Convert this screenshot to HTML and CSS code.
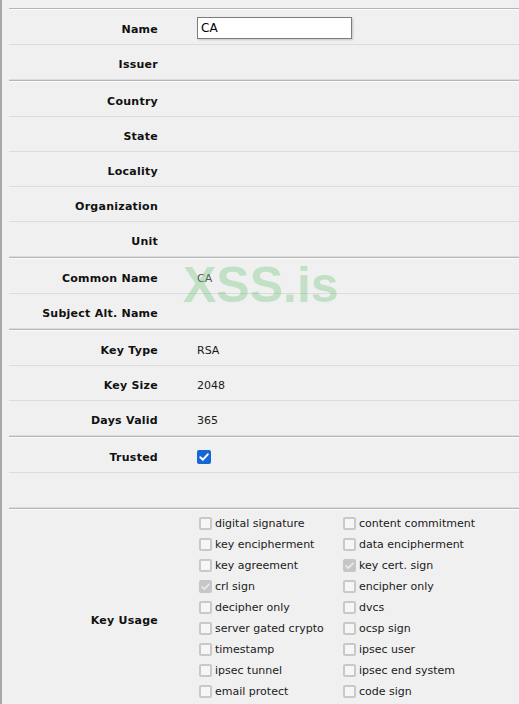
FILE: index.html
```html
<!DOCTYPE html>
<html>
<head>
<meta charset="utf-8">
<link rel="stylesheet" href="styles.css">
</head>
<body>
<div class="page">
  <div class="group">
    <div class="row"><div class="label">Name</div><div class="value"><div class="textbox">CA</div></div></div>
    <div class="row"><div class="label">Issuer</div><div class="value"></div></div>
  </div>
  <div class="group">
    <div class="row"><div class="label">Country</div><div class="value"></div></div>
    <div class="row"><div class="label">State</div><div class="value"></div></div>
    <div class="row"><div class="label">Locality</div><div class="value"></div></div>
    <div class="row"><div class="label">Organization</div><div class="value"></div></div>
    <div class="row"><div class="label">Unit</div><div class="value"></div></div>
  </div>
  <div class="group">
    <div class="row"><div class="label">Common Name</div><div class="value muted">CA</div></div>
    <div class="row"><div class="label">Subject Alt. Name</div><div class="value"></div></div>
  </div>
  <div class="group">
    <div class="row"><div class="label">Key Type</div><div class="value">RSA</div></div>
    <div class="row"><div class="label">Key Size</div><div class="value">2048</div></div>
    <div class="row"><div class="label">Days Valid</div><div class="value">365</div></div>
  </div>
  <div class="group">
    <div class="row"><div class="label">Trusted</div><div class="value"><span class="cb cb-on"><svg viewBox="0 0 14 14" width="14" height="14"><path d="M3.3 7.2 L5.9 9.7 L10.8 4.3" fill="none" stroke="#fff" stroke-width="2" stroke-linecap="round" stroke-linejoin="round"/></svg></span></div></div>
    <div class="row"><div class="label"></div><div class="value"></div></div>
  </div>
  <div class="group">
    <div class="row usage-row">
      <div class="label">Key Usage</div>
      <div class="value">
        <div class="checks">
          <label class="chk"><span class="cb"></span>digital signature</label>
          <label class="chk"><span class="cb"></span>content commitment</label>
          <label class="chk"><span class="cb"></span>key encipherment</label>
          <label class="chk"><span class="cb"></span>data encipherment</label>
          <label class="chk"><span class="cb"></span>key agreement</label>
          <label class="chk"><span class="cb cb-dis"><svg viewBox="0 0 13 13" width="13" height="13"><path d="M3 6.8 L5.4 9.1 L10 4.2" fill="none" stroke="#ececec" stroke-width="1.6" stroke-linecap="round" stroke-linejoin="round"/></svg></span>key cert. sign</label>
          <label class="chk"><span class="cb cb-dis"><svg viewBox="0 0 13 13" width="13" height="13"><path d="M3 6.8 L5.4 9.1 L10 4.2" fill="none" stroke="#ececec" stroke-width="1.6" stroke-linecap="round" stroke-linejoin="round"/></svg></span>crl sign</label>
          <label class="chk"><span class="cb"></span>encipher only</label>
          <label class="chk"><span class="cb"></span>decipher only</label>
          <label class="chk"><span class="cb"></span>dvcs</label>
          <label class="chk"><span class="cb"></span>server gated crypto</label>
          <label class="chk"><span class="cb"></span>ocsp sign</label>
          <label class="chk"><span class="cb"></span>timestamp</label>
          <label class="chk"><span class="cb"></span>ipsec user</label>
          <label class="chk"><span class="cb"></span>ipsec tunnel</label>
          <label class="chk"><span class="cb"></span>ipsec end system</label>
          <label class="chk"><span class="cb"></span>email protect</label>
          <label class="chk"><span class="cb"></span>code sign</label>
        </div>
      </div>
    </div>
  </div>
  <div class="watermark">XSS.is</div>
</div>
</body>
</html>
```

FILE: styles.css
```css
html, body {
  margin: 0;
  padding: 0;
  background: #f0f0f0;
}
body {
  font-family: "DejaVu Sans", Verdana, sans-serif;
  font-size: 11px;
  color: #1a1a1a;
}
.page {
  position: relative;
  min-height: 100vh;
  border-left: 2px solid #a8a8a8;
  padding-top: 8px;
  padding-left: 7px;
  box-sizing: border-box;
}
.group {
  border-top: 1px solid #b7b7b7;
}
.group > .row:first-child {
  border-top: 1px solid #fafafa;
}
.row {
  display: flex;
  align-items: center;
  height: 34px;
  border-bottom: 1px solid #dcdcdc;
}
.label {
  width: 149px;
  flex: none;
  text-align: right;
  font-weight: bold;
  letter-spacing: 0.25px;
  color: #111;
  padding-top: 4px;
}
.value {
  margin-left: 39px;
  flex: 1;
  padding-top: 4px;
}
.muted {
  color: #555;
}
.textbox {
  width: 150px;
  height: 20px;
  line-height: 20px;
  margin-top: -2px;
  background: #fff;
  border: 1px solid #7d7d7d;
  box-shadow: 1px 1px 2px rgba(0,0,0,0.18);
  padding-left: 3px;
  font-size: 12px;
  color: #000;
}
.cb {
  display: inline-block;
  width: 13px;
  height: 13px;
  box-sizing: border-box;
  border: 2px solid #c9c9c9;
  border-radius: 2px;
  background: #f6f6f6;
  vertical-align: middle;
  flex: none;
}
.cb svg {
  display: block;
  margin: -2px;
}
.cb-on {
  width: 14px;
  height: 14px;
  border: none;
  background: #1766d6;
  border-radius: 2px;
}
.cb-on svg {
  margin: 0;
}
.cb-dis {
  background: #c6c6c6;
  border-color: #c6c6c6;
}
.usage-row {
  height: auto;
  border-bottom: none;
  padding: 3px 0 0;
}
.usage-row .value {
  margin-left: 41px;
  padding-top: 0;
  padding-bottom: 21px;
}
.checks {
  display: grid;
  grid-template-columns: 144px 160px;
  grid-auto-rows: 21px;
}
.chk {
  display: flex;
  align-items: center;
  gap: 3px;
  color: #1a1a1a;
  white-space: nowrap;
}
.watermark {
  position: absolute;
  left: 181px;
  top: 260px;
  font-family: "Liberation Sans", Arial, sans-serif;
  font-weight: bold;
  font-size: 50px;
  line-height: 50px;
  color: rgba(70, 180, 80, 0.27);
  pointer-events: none;
}
```
